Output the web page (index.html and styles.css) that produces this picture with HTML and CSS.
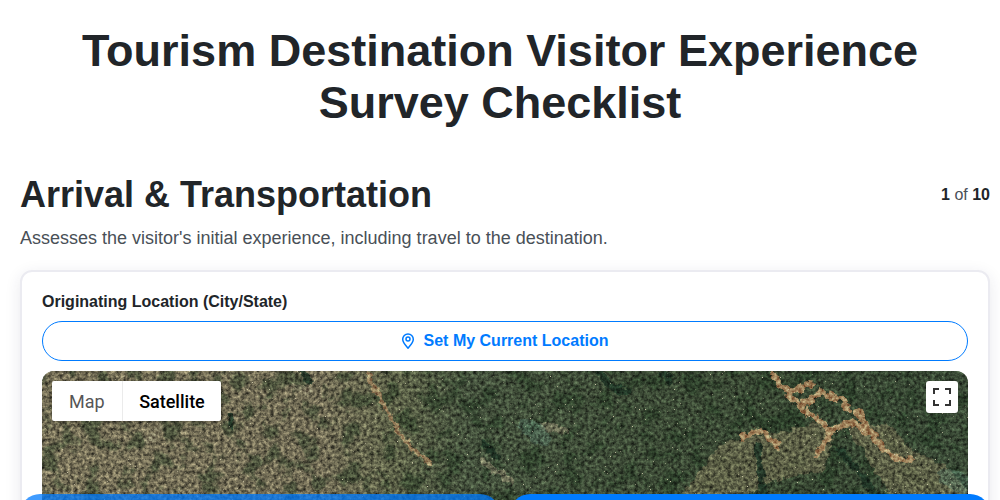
FILE: index.html
```html
<!DOCTYPE html>
<html lang="en">
<head>
<meta charset="utf-8">
<title>Tourism Destination Visitor Experience Survey Checklist</title>
<link rel="stylesheet" href="styles.css">
</head>
<body>
<main class="page">
  <h1 class="title">Tourism Destination Visitor Experience Survey Checklist</h1>
  <div class="content">
    <div class="section-head">
      <h2 class="section-title">Arrival &amp; Transportation</h2>
      <div class="progress"><b>1</b> of <b>10</b></div>
    </div>
    <p class="section-desc">Assesses the visitor's initial experience, including travel to the destination.</p>
    <section class="card">
      <label class="field-label">Originating Location (City/State)</label>
      <button class="locate" type="button">
        <svg class="pin" viewBox="0 0 16 16" width="16" height="16" aria-hidden="true"><path d="M8 15.2C6 12.8 2.7 9.4 2.7 6.2a5.3 5.3 0 0 1 10.6 0c0 3.2-3.3 6.6-5.3 9z" fill="none" stroke="currentColor" stroke-width="1.5" stroke-linejoin="round"/><circle cx="8" cy="6.1" r="2" fill="none" stroke="currentColor" stroke-width="1.5"/></svg>
        Set My Current Location
      </button>
      <div class="map">
        <svg class="sat" viewBox="0 0 926 300" width="926" height="300" aria-hidden="true">
          <defs>
            <linearGradient id="ground" x1="0" x2="1" y1="0" y2="0">
              <stop offset="0" stop-color="#7f785e"/>
              <stop offset=".3" stop-color="#78725a"/>
              <stop offset=".38" stop-color="#62674c"/>
              <stop offset=".46" stop-color="#485640"/>
              <stop offset=".8" stop-color="#3c4c36"/>
              <stop offset="1" stop-color="#3e4f3a"/>
            </linearGradient>
            <filter id="tex" x="0" y="0" width="100%" height="100%" color-interpolation-filters="sRGB">
              <feTurbulence type="fractalNoise" baseFrequency=".28" numOctaves="4" seed="8" result="n"/>
              <feColorMatrix in="n" values=".85 0 0 0 .04  .85 0 0 0 .04  .85 0 0 0 .04  0 0 0 0 1" result="g"/>
              <feBlend in="g" in2="SourceGraphic" mode="overlay" result="textured"/>
              <feTurbulence type="fractalNoise" baseFrequency=".6" numOctaves="2" seed="3"/>
              <feColorMatrix values="0 0 0 0 .78  0 0 0 0 .76  0 0 0 0 .64  12 0 0 0 -9.3" result="sp"/>
              <feMerge><feMergeNode in="textured"/><feMergeNode in="sp"/></feMerge>
            </filter>
            <filter id="spots" x="0" y="0" width="100%" height="100%" color-interpolation-filters="sRGB">
              <feTurbulence type="fractalNoise" baseFrequency=".05" numOctaves="4" seed="21"/>
              <feColorMatrix values="0 0 0 0 .13  0 0 0 0 .22  0 0 0 0 .13  6 0 0 0 -3"/>
            </filter>
            <filter id="rough" x="-5%" y="-5%" width="110%" height="110%" color-interpolation-filters="sRGB">
              <feTurbulence type="fractalNoise" baseFrequency=".12" numOctaves="3" seed="5"/>
              <feDisplacementMap in="SourceGraphic" scale="10" xChannelSelector="R" yChannelSelector="G"/>
            </filter>
          </defs>
          <g filter="url(#tex)">
            <rect width="926" height="300" fill="url(#ground)"/>
            <rect width="926" height="300" filter="url(#spots)" opacity=".45"/>
            <g filter="url(#rough)">
              <path class="patch" d="M640 122 680 72 735 62 770 52 792 60 782 100 720 112 700 130z"/>
              <path class="patch" d="M800 50 850 55 870 80 905 95 930 125 850 130 820 80z"/>
              <path class="tan" d="M731 4 745 22 758 36 778 22 801 29 808 39 M758 36 790 60 810 50 830 65 850 85 870 90 M745 22 770 12 M700 66 720 60 735 75 M790 60 775 85 M830 65 815 40"/>
              <path class="trail" d="M325 2 341 32 355 59 378 86 388 92"/>
              <path class="pale" d="M120 55 105 70 M250 15 270 20 M500 55 525 60 M440 90 470 110"/>
              <path class="deep" d="M558 2 572 18 585 20 M622 2 628 10 M261 3 268 10 M188 47 188 56 M715 75 722 125 M800 80 835 125 M441 72 455 86"/>
              <path class="haze" d="M485 56 500 66 M905 105 926 115"/>
            </g>
          </g>
        </svg>
        <div class="map-type">
          <button class="map-tab" type="button">Map</button>
          <button class="map-tab active" type="button">Satellite</button>
        </div>
        <button class="fullscreen" type="button" aria-label="Toggle fullscreen view">
          <svg viewBox="0 0 18 18" width="18" height="18" aria-hidden="true"><path d="M0 6V0h6v2H2v4zM12 0h6v6h-2V2h-4zM0 12h2v4h4v2H0zM16 12h2v6h-6v-2h4z" fill="#333"/></svg>
        </button>
      </div>
    </section>
  </div>
</main>
<nav class="actions">
  <button class="action prev" type="button" aria-label="Previous"></button>
  <button class="action next" type="button" aria-label="Next"></button>
</nav>
</body>
</html>
```
FILE: styles.css
```css
* { box-sizing: border-box; }
html, body { margin: 0; height: 100%; overflow: hidden; background: #fff; }
body { font-family: "Liberation Sans", Arial, sans-serif; color: #212529; }
.page { padding: 20px; }
.title {
  margin: 5px 0 44px;
  font-size: 45px;
  line-height: 52px;
  font-weight: 700;
  text-align: center;
}
.content { margin-right: -10px; }
.section-head { display: flex; justify-content: space-between; align-items: flex-start; }
.section-title { margin: 0; font-size: 36px; line-height: 43px; font-weight: 700; }
.progress { font-size: 16px; line-height: 43px; color: #495057; }
.progress b { color: #212529; }
.section-desc { margin: 9px 0 19px; font-size: 18px; line-height: 26px; color: #495057; }
.card {
  height: 400px;
  padding: 20px;
  border: 2px solid #ebebf1;
  border-radius: 12px;
  background: #fff;
  box-shadow: 0 4px 16px rgba(40, 40, 80, .1);
}
.field-label { display: block; margin-bottom: 10px; font-size: 16px; line-height: 19px; font-weight: 700; }
.locate {
  display: flex;
  align-items: center;
  justify-content: center;
  gap: 8px;
  width: 100%;
  height: 40px;
  padding: 0 2px 0 0;
  border: 1px solid #007bff;
  border-radius: 20px;
  background: #fff;
  color: #007bff;
  font: 700 16px "Liberation Sans", Arial, sans-serif;
}
.pin { flex: none; }
.map {
  position: relative;
  height: 300px;
  margin-top: 10px;
  border-radius: 12px;
  overflow: hidden;
  background: #55604a;
}
.sat { display: block; }
.patch { fill: #7c7658; opacity: .6; }
.tan, .trail, .pale, .deep, .haze { fill: none; stroke-linejoin: round; stroke-linecap: round; }
.tan { stroke: #a58a62; stroke-width: 6; }
.trail { stroke: #9a8560; stroke-width: 4; }
.pale { stroke: #8f8a70; stroke-width: 6; opacity: .6; }
.deep { stroke: #1e3526; stroke-width: 7; opacity: .85; }
.haze { stroke: #587a68; stroke-width: 18; opacity: .45; }
.map-type {
  position: absolute;
  top: 10px;
  left: 10px;
  display: flex;
  height: 40px;
  border-radius: 2px;
  background: #fff;
  box-shadow: 0 1px 4px rgba(0, 0, 0, .3);
}
.map-tab {
  height: 40px;
  padding: 0 17px;
  border: 0;
  background: none;
  color: #565656;
  font: 400 18px Roboto, Arial, sans-serif;
}
.map-tab.active { padding: 0 16.5px; border-left: 1px solid #ebebeb; color: #000; font-weight: 500; }
.fullscreen {
  position: absolute;
  top: 10px;
  right: 10px;
  display: flex;
  align-items: center;
  justify-content: center;
  width: 32px;
  height: 32px;
  padding: 0;
  border: 0;
  border-radius: 3px;
  background: #fff;
}
.actions {
  position: fixed;
  left: 20px;
  right: 10px;
  bottom: -34px;
  display: flex;
  gap: 10px;
}
.action { flex: 1; height: 40px; border: 0; border-radius: 20px; background: #007bff; }
.action.prev { opacity: .75; }
```
